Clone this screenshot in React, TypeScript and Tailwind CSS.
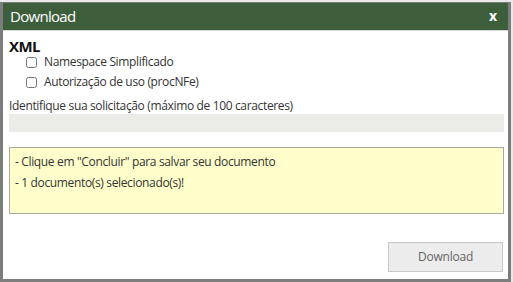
const App = () => {
    return (
        <div className="w-[513px] h-[282px] bg-[#e9e9e9] pt-[2px] overflow-hidden" style={{ fontFamily: '"Open Sans", "Liberation Sans", sans-serif' }}>
            <div className="w-[511px] h-[280px] border-[3px] border-t-[1px] border-[#7d7d7d] bg-white flex flex-col">
                <div className="h-[28px] shrink-0 bg-[#3c5e3a] flex items-center justify-between pl-[7px] pr-[11px] border-b border-[#d6d6d6]">
                    <span className="text-white text-[15px] tracking-[-0.7px]">Download</span>
                    <span className="text-white text-[14px] font-bold leading-none mb-[1px]">x</span>
                </div>

                <div className="flex-1 pl-[6px] pt-[7px] flex flex-col">
                    <h2 className="h-[16px] text-[15px] font-bold text-[#111] leading-[16px] tracking-[-0.6px]">XML</h2>
                    <label className="flex items-center gap-[7px] ml-[17px] mt-[-2px] h-[20px] text-[12px] tracking-[-0.35px] text-[#333]">
                        <input type="checkbox" className="w-[11px] h-[11px] accent-gray-400" />
                        Namespace Simplificado
                    </label>
                    <label className="flex items-center gap-[7px] ml-[17px] h-[20px] text-[12px] tracking-[-0.35px] text-[#333]">
                        <input type="checkbox" className="w-[11px] h-[11px] accent-gray-400" />
                        Autorização de uso (procNFe)
                    </label>

                    <p className="mt-[6px] h-[16px] text-[12px] tracking-[-0.35px] text-[#333] leading-[16px]">Identifique sua solicitação (máximo de 100 caracteres)</p>
                    <input type="text" className="w-[495px] h-[18px] bg-[#ebebe8] outline-none" />

                    <div className="mt-[15px] w-[495px] h-[67px] bg-[#ffffcc] border border-[#a9a99f] px-[5px] pt-[3px] text-[12px] tracking-[-0.35px] text-[#333] leading-[21px]">
                        <p>- Clique em "Concluir" para salvar seu documento</p>
                        <p>- 1 documento(s) selecionado(s)!</p>
                    </div>

                    <div className="flex justify-end mt-[28px] pr-[5px]">
                        <button className="w-[115px] h-[30px] bg-[#ececec] border border-[#c8c8c8] text-[12px] tracking-[-0.2px] text-[#666]">
                            Download
                        </button>
                    </div>
                </div>
            </div>
        </div>
    );
};

export default App;
